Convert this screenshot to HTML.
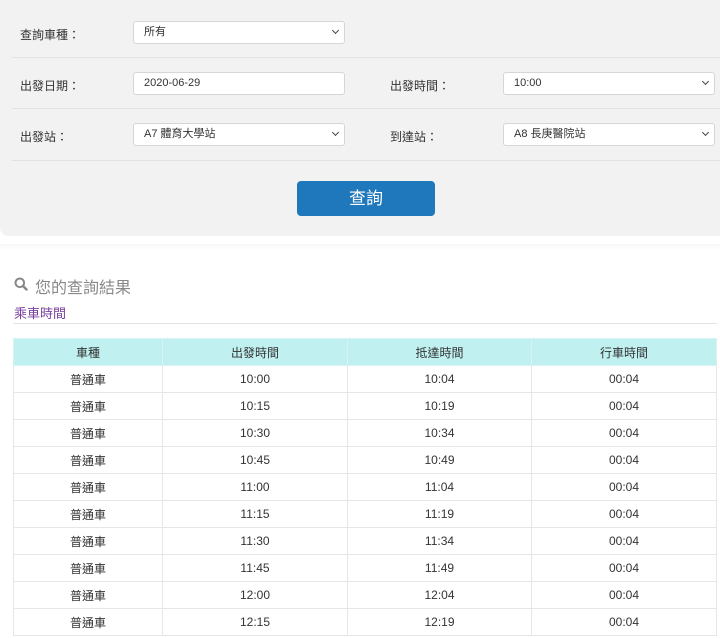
<!DOCTYPE html>
<html><head><meta charset="utf-8"><style>
*{box-sizing:border-box;margin:0;padding:0}
body{width:720px;height:638px;overflow:hidden;background:#fff;font-family:"Liberation Sans","Noto Sans CJK TC",sans-serif;font-size:12px;color:#333}
.panel{position:absolute;left:0;top:0;width:720px;height:236px;background:#f2f2f2;border-radius:0 0 0 8px}
.lbl{position:absolute;font-size:12px;color:#333}
.sel{position:absolute;height:23px;background:#fff;border:1px solid #d6d6d6;border-radius:3px;font-size:11px;line-height:21px;padding-left:10px;color:#333}
.sel.dd::after{content:"";position:absolute;right:6px;top:6px;width:4px;height:4px;border-right:1.2px solid #444;border-bottom:1.2px solid #444;transform:rotate(45deg)}
.hr{position:absolute;left:12px;width:708px;height:1px;background:#e2e2e2}
.btn{position:absolute;left:297px;top:181px;width:138px;height:35px;background:#1f78bc;border-radius:4px;color:#fff;font-size:17px;text-align:center;line-height:35px}
.sh{position:absolute;left:0;top:244px;width:720px;height:6px;background:linear-gradient(#f6f6f6,#fff)}
table{position:absolute;left:13px;top:338px;width:704px;border-collapse:collapse}
td,th{border:1px solid #e6e6e6;text-align:center;height:27px;font-weight:normal;font-size:12px;color:#333}
th{background:#c0f1f0;border-color:#d8f3f3}
</style></head><body>
<div class="panel">
<div class="lbl" style="left:20px;top:26px">查詢車種：</div>
<div class="sel dd" style="left:133px;top:21px;width:212px">所有</div>
<div class="hr" style="top:57px"></div>
<div class="lbl" style="left:20px;top:77px">出發日期：</div>
<div class="sel" style="left:133px;top:72px;width:212px">2020-06-29</div>
<div class="lbl" style="left:390px;top:77px">出發時間：</div>
<div class="sel dd" style="left:503px;top:72px;width:212px">10:00</div>
<div class="hr" style="top:108px"></div>
<div class="lbl" style="left:20px;top:128px">出發站：</div>
<div class="sel dd" style="left:133px;top:123px;width:212px">A7 體育大學站</div>
<div class="lbl" style="left:390px;top:128px">到達站：</div>
<div class="sel dd" style="left:503px;top:123px;width:212px">A8 長庚醫院站</div>
<div class="hr" style="top:160px"></div>
<div class="btn">查詢</div>
</div>
<div class="sh"></div>
<svg style="position:absolute;left:14px;top:277px" width="14" height="14" viewBox="0 0 14 14"><circle cx="5.8" cy="5.8" r="4.3" fill="none" stroke="#888" stroke-width="2"/><line x1="9" y1="9" x2="12.5" y2="12.5" stroke="#888" stroke-width="2.4" stroke-linecap="round"/></svg>
<div style="position:absolute;left:35px;top:274px;font-size:16px;color:#888">您的查詢結果</div>
<div style="position:absolute;left:14px;top:303px;font-size:13px;color:#7a3e9d">乘車時間</div>
<div style="position:absolute;left:13px;top:323px;width:704px;height:1px;background:#e2e2e2"></div>
<table>
<tr><th style="width:149px">車種</th><th style="width:185px">出發時間</th><th style="width:184px">抵達時間</th><th>行車時間</th></tr>
<tr><td>普通車</td><td>10:00</td><td>10:04</td><td>00:04</td></tr>
<tr><td>普通車</td><td>10:15</td><td>10:19</td><td>00:04</td></tr>
<tr><td>普通車</td><td>10:30</td><td>10:34</td><td>00:04</td></tr>
<tr><td>普通車</td><td>10:45</td><td>10:49</td><td>00:04</td></tr>
<tr><td>普通車</td><td>11:00</td><td>11:04</td><td>00:04</td></tr>
<tr><td>普通車</td><td>11:15</td><td>11:19</td><td>00:04</td></tr>
<tr><td>普通車</td><td>11:30</td><td>11:34</td><td>00:04</td></tr>
<tr><td>普通車</td><td>11:45</td><td>11:49</td><td>00:04</td></tr>
<tr><td>普通車</td><td>12:00</td><td>12:04</td><td>00:04</td></tr>
<tr><td>普通車</td><td>12:15</td><td>12:19</td><td>00:04</td></tr>
</table>
</body></html>
